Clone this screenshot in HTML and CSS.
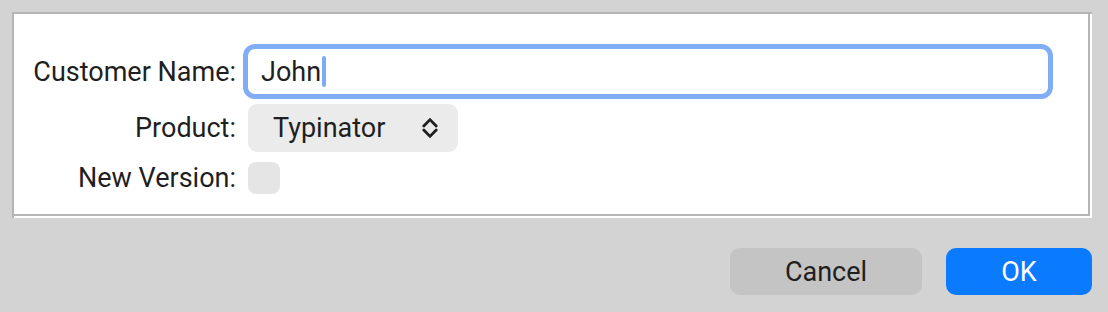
FILE: index.html
```html
<!DOCTYPE html>
<html lang="en">
  <head>
    <meta charset="UTF-8">
    <title>New Registration</title>
    <link rel="stylesheet" href="styles.css">
  </head>

  <body>
    <div class="dialog">
      <div class="box">
        <div class="box-inner">
          <div class="form">
            <label class="label">Customer Name:</label>
            <div class="field">
              <span class="field-text">John</span><span class="caret"></span>
            </div>

            <label class="label">Product:</label>
            <div class="popup">
              <span>Typinator</span>
              <svg class="chevrons" width="16" height="20" viewBox="0 0 16 20">
                <polyline points="1.8,8 8,1.6 14.2,8" />
                <polyline points="1.8,12 8,18.4 14.2,12" />
              </svg>
            </div>

            <label class="label">New Version:</label>
            <div class="checkbox"></div>
          </div>
        </div>
      </div>

      <div class="buttons">
        <button class="btn cancel">Cancel</button>
        <button class="btn ok">OK</button>
      </div>
    </div>
  </body>
</html>
```

FILE: styles.css
```css
body {
  margin: 0;
  background-color: #d3d3d3;
  font-family: Roboto, 'Liberation Sans', sans-serif;
  font-size: 27px;
  color: #1f1f1f;
}

.dialog {
  padding: 12px 16px 0 12px;
}

/* sunken group box */
.box {
  border-top: 2px solid #b5b5b5;
  border-left: 2px solid #b5b5b5;
  padding: 0 2px 2px 0;
  background-color: white;
}

.box-inner {
  border-right: 2px solid #b5b5b5;
  border-bottom: 2px solid #b5b5b5;
  padding: 35px 40px 20px 0;
}

.form {
  display: grid;
  grid-template-columns: 222px 1fr;
  column-gap: 12px;
  row-gap: 10px;
  align-items: center;
}

.label {
  text-align: right;
}

.field {
  height: 45px;
  border-radius: 7px;
  background-color: white;
  box-shadow: 0 0 0 5px #80adf6;
  display: flex;
  align-items: center;
  padding-left: 13px;
}

.caret {
  width: 4px;
  height: 31px;
  margin-left: 1px;
  border-radius: 2px;
  background-color: #7eabf5;
}

.popup {
  width: 210px;
  height: 48px;
  box-sizing: border-box;
  padding: 0 20px 0 25px;
  border-radius: 9px;
  background-color: #ebebeb;
  display: flex;
  align-items: center;
  justify-content: space-between;
}

.chevrons {
  fill: none;
  stroke: #1f1f1f;
  stroke-width: 2.8;
  stroke-linecap: round;
  stroke-linejoin: round;
}

.checkbox {
  width: 32px;
  height: 32px;
  border-radius: 8px;
  background-color: #e5e5e5;
}

.buttons {
  display: flex;
  justify-content: flex-end;
  gap: 24px;
  margin-top: 30px;
}

.btn {
  height: 47px;
  border: none;
  border-radius: 10px;
  font-family: inherit;
  font-size: 27px;
  cursor: pointer;
}

.cancel {
  width: 192px;
  background-color: #c4c4c4;
  color: #1f1f1f;
}

.ok {
  width: 146px;
  background-color: #0a7aff;
  color: white;
}
```
